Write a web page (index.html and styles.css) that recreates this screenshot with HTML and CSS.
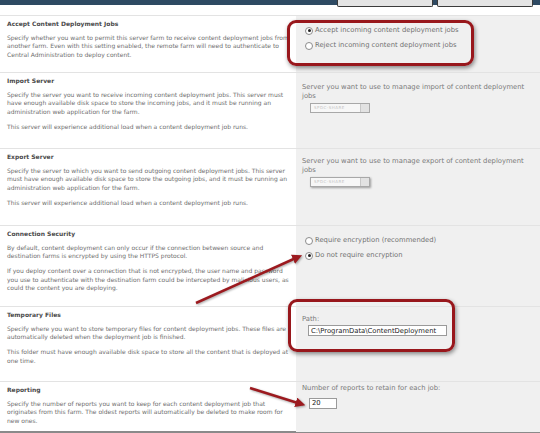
FILE: index.html
```html
<!DOCTYPE html>
<html>
<head>
  <title>Content Deployment Settings</title>
  <link rel="stylesheet" href="styles.css">
</head>
<body>
  <div class="topbar">
    <span class="tab"></span>
    <span class="tab"></span>
  </div>

  <div class="sections">
    <div class="section">
      <div class="desc">
        <h3>Accept Content Deployment Jobs</h3>
        <p>Specify whether you want to permit this server farm to receive content deployment jobs from another farm. Even with this setting enabled, the remote farm will need to authenticate to Central Administration to deploy content.</p>
      </div>
      <div class="ctrl ctrl-radios">
        <label class="radio"><span class="dot on"></span>Accept incoming content deployment jobs</label>
        <label class="radio"><span class="dot"></span>Reject incoming content deployment jobs</label>
      </div>
    </div>

    <div class="section">
      <div class="desc">
        <h3>Import Server</h3>
        <p>Specify the server you want to receive incoming content deployment jobs. This server must have enough available disk space to store the incoming jobs, and it must be running an administration web application for the farm.</p>
        <p>This server will experience additional load when a content deployment job runs.</p>
      </div>
      <div class="ctrl">
        <div class="caption">Server you want to use to manage import of content deployment jobs</div>
        <div class="picker"><span class="picker-text">SPDC-SHARE</span><span class="picker-btn"></span></div>
      </div>
    </div>

    <div class="section">
      <div class="desc">
        <h3>Export Server</h3>
        <p>Specify the server to which you want to send outgoing content deployment jobs. This server must have enough available disk space to store the outgoing jobs, and it must be running an administration web application for the farm.</p>
        <p>This server will experience additional load when a content deployment job runs.</p>
      </div>
      <div class="ctrl ctrl-snug">
        <div class="caption">Server you want to use to manage export of content deployment jobs</div>
        <div class="picker picker-shadow"><span class="picker-text">SPDC-SHARE</span><span class="picker-btn"></span></div>
      </div>
    </div>

    <div class="section">
      <div class="desc">
        <h3>Connection Security</h3>
        <p>By default, content deployment can only occur if the connection between source and destination farms is encrypted by using the HTTPS protocol.</p>
        <p>If you deploy content over a connection that is not encrypted, the user name and password you use to authenticate with the destination farm could be intercepted by malicious users, as could the content you are deploying.</p>
      </div>
      <div class="ctrl ctrl-radios">
        <label class="radio"><span class="dot"></span>Require encryption (recommended)</label>
        <label class="radio"><span class="dot on"></span>Do not require encryption</label>
      </div>
    </div>

    <div class="section">
      <div class="desc">
        <h3>Temporary Files</h3>
        <p>Specify where you want to store temporary files for content deployment jobs. These files are automatically deleted when the deployment job is finished.</p>
        <p>This folder must have enough available disk space to store all the content that is deployed at one time.</p>
      </div>
      <div class="ctrl ctrl-snug">
        <div class="caption">Path:</div>
        <input class="field field-path" type="text" value="C:\ProgramData\ContentDeployment">
      </div>
    </div>

    <div class="section">
      <div class="desc">
        <h3>Reporting</h3>
        <p>Specify the number of reports you want to keep for each content deployment job that originates from this farm. The oldest reports will automatically be deleted to make room for new ones.</p>
      </div>
      <div class="ctrl ctrl-top">
        <div class="caption">Number of reports to retain for each job:</div>
        <input class="field field-count" type="text" value="20">
      </div>
    </div>
  </div>

  <!-- screenshot annotations -->
  <div class="callout callout-accept"></div>
  <div class="callout callout-path"></div>
  <svg class="arrows" width="540" height="433" viewBox="0 0 540 433">
    <defs>
      <marker id="head" markerWidth="4" markerHeight="4" refX="2.2" refY="2" orient="auto" markerUnits="strokeWidth">
        <path d="M0,0 L4,2 L0,4 Z" fill="#9c1a1f"/>
      </marker>
    </defs>
    <line x1="196" y1="303" x2="298" y2="257" stroke="#9c1a1f" stroke-width="2.5" marker-end="url(#head)"/>
    <line x1="250" y1="388" x2="301" y2="404" stroke="#9c1a1f" stroke-width="2.5" marker-end="url(#head)"/>
  </svg>
</body>
</html>
```

FILE: styles.css
```css
/* page */
body {
  margin: 0;
  width: 540px;
  height: 433px;
  overflow: hidden;
  position: relative;
  background-color: #fff;
  font-family: "DejaVu Sans", Verdana, sans-serif;
}

.topbar {
  height: 15px;
  display: flex;
  justify-content: flex-end;
  gap: 4px;
  padding-right: 7px;
  background: linear-gradient(#2e4a63 0 5px, #fff 5px);
}

.tab {
  width: 94px;
  height: 6px;
  background-color: #e4e4e4;
  border: 1px solid #3b3b3b;
  border-top: none;
  border-radius: 0 0 2px 2px;
}

.sections {
  display: grid;
  grid-template-rows: 57px 76px 77px 81px 75px 50px;
  border-bottom: 2px solid #8a8a8a;
}

.section {
  display: grid;
  grid-template-columns: 296px 1fr;
  border-top: 1px solid #e3e3e3;
}

/* left description column */
.desc {
  padding: 4px 4px 0 7px;
  color: #6e6e6e;
  font-size: 6px;
  line-height: 8.4px;
}

.desc h3 {
  margin: 0 0 5.5px;
  font-size: 6px;
  color: #4a4a4a;
  font-weight: bold;
}

.desc p {
  margin: 0 0 6.5px;
}

/* right control column */
.ctrl {
  background-color: #f0f0f0;
  padding: 10px 6px 0 6px;
  color: #7a7a7a;
  font-size: 6.8px;
  line-height: 9px;
}

.ctrl-snug {
  padding-top: 8px;
}

.ctrl-top {
  padding-top: 1.5px;
}

.ctrl-radios {
  display: flex;
  flex-direction: column;
  gap: 6px;
  padding-left: 9px;
}

.radio {
  display: flex;
  align-items: center;
  gap: 2px;
  color: #707070;
}

.dot {
  width: 6px;
  height: 6px;
  border: 1px solid #8c8c8c;
  border-radius: 50%;
  background-color: #fff;
  display: flex;
  align-items: center;
  justify-content: center;
}

.dot.on::after {
  content: "";
  width: 3px;
  height: 3px;
  border-radius: 50%;
  background-color: #222;
}

.picker {
  margin: 1.5px 0 0 8px;
  width: 60px;
  height: 10px;
  box-sizing: border-box;
  border: 1px solid #a8a8a8;
  background-color: #f7f7f7;
  display: flex;
  align-items: center;
}

.picker-shadow {
  box-shadow: 1px 1px 2px rgba(0, 0, 0, 0.35);
}

.picker-text {
  flex: 1;
  padding-left: 3px;
  font-size: 4px;
  color: #c4c4c4;
  letter-spacing: 0.5px;
}

.picker-btn {
  width: 8px;
  height: 8px;
  background-color: #e2e2e2;
  border-left: 1px solid #c8c8c8;
}

.field {
  display: block;
  box-sizing: border-box;
  height: 11px;
  padding: 0 2px;
  border: 1px solid #9a9a9a;
  background-color: #fff;
  font-family: "DejaVu Sans", Verdana, sans-serif;
  font-size: 6.8px;
  color: #222;
}

.field-path {
  margin: 1px 0 0 6px;
  width: 139px;
}

.field-count {
  margin: 5px 0 0 7px;
  width: 28px;
}

/* annotations drawn over the screenshot */
.callout {
  position: absolute;
  box-sizing: border-box;
  border: 3px solid #98171c;
  border-radius: 9px;
  box-shadow: 1px 2px 4px rgba(0, 0, 0, 0.45);
}

.callout-accept {
  left: 287px;
  top: 20px;
  width: 187px;
  height: 46px;
}

.callout-path {
  left: 288px;
  top: 299px;
  width: 167px;
  height: 53px;
}

.arrows {
  position: absolute;
  left: 0;
  top: 0;
  pointer-events: none;
  filter: drop-shadow(1px 1px 1px rgba(0, 0, 0, 0.35));
}
```
